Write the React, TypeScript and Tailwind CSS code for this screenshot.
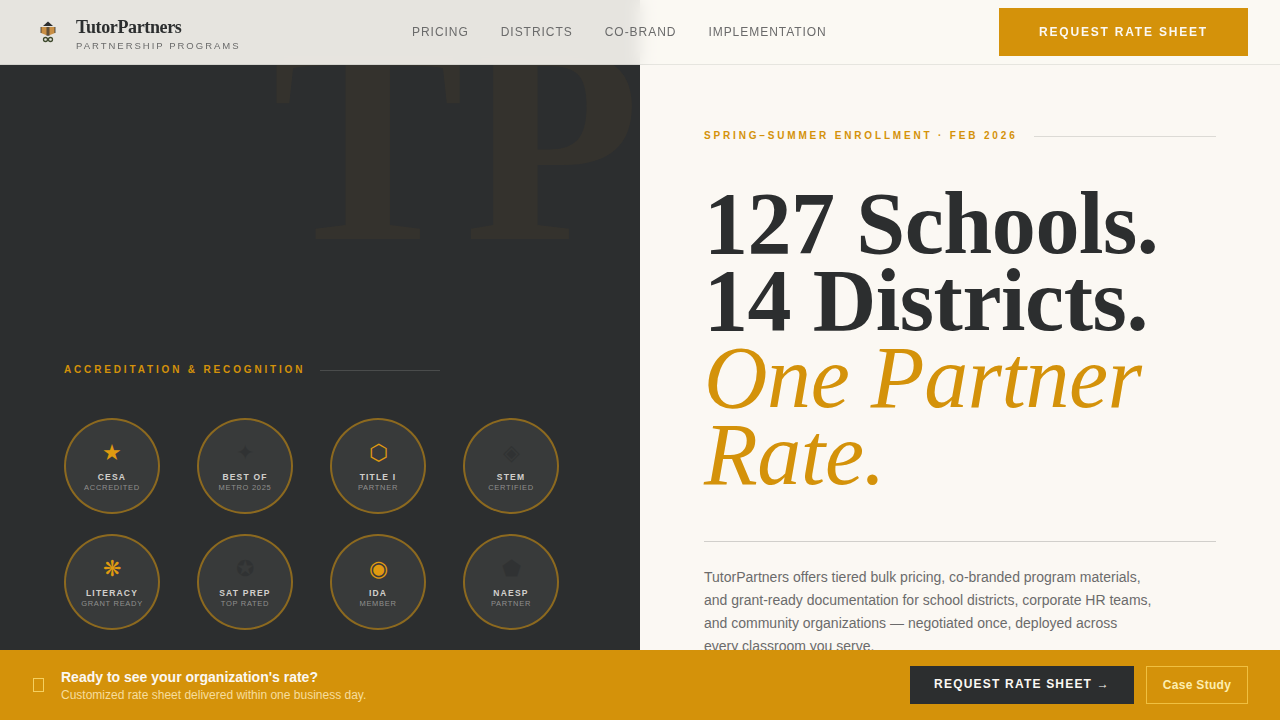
const badges = [
  { icon: '★', title: 'CESA', sub: 'ACCREDITED', dark: false },
  { icon: '✦', title: 'BEST OF', sub: 'METRO 2025', dark: true },
  { icon: '⬡', title: 'TITLE I', sub: 'PARTNER', dark: false },
  { icon: '◈', title: 'STEM', sub: 'CERTIFIED', dark: true },
  { icon: '❋', title: 'LITERACY', sub: 'GRANT READY', dark: false },
  { icon: '✪', title: 'SAT PREP', sub: 'TOP RATED', dark: true },
  { icon: '◉', title: 'IDA', sub: 'MEMBER', dark: false },
  { icon: '⬟', title: 'NAESP', sub: 'PARTNER', dark: true },
]

const navLinks = ['PRICING', 'DISTRICTS', 'CO-BRAND', 'IMPLEMENTATION']

function Logo() {
  return (
    <svg width="16" height="22" viewBox="0 0 16 22" className="shrink-0">
      <path d="M8 0.5 L13 5 L3 5 Z" fill="#2c2e2f" />
      <path d="M1 6 H15 V12 L10 14 H6 L1 12 Z" fill="#c98f45" />
      <rect x="6.5" y="6" width="3" height="9" fill="#2c2e2f" opacity="0.65" />
      <path d="M1 12 V6 M15 12 V6" stroke="#2c2e2f" strokeWidth="0.8" />
      <circle cx="5.5" cy="18.5" r="2" fill="none" stroke="#3f4a2e" strokeWidth="1.3" />
      <circle cx="10.5" cy="18.5" r="2" fill="none" stroke="#3f4a2e" strokeWidth="1.3" />
    </svg>
  )
}

export default function App() {
  return (
    <div className="relative h-screen overflow-hidden bg-[#fbf8f3] font-['Liberation_Sans',sans-serif]">
      <header className="absolute top-0 left-0 right-0 z-20 flex h-[65px] items-center justify-between border-b border-[#2c2e2f]/10 bg-[#fbf8f3]/90 pl-10 pr-8 backdrop-blur-sm">
        <div className="flex items-center gap-5">
          <Logo />
          <div>
            <div className="font-['Liberation_Serif',serif] text-lg font-bold leading-[28px] tracking-[-0.38px] text-[#2c2e2f]">TutorPartners</div>
            <div className="mt-[-1px] text-[9.5px] leading-[12px] tracking-[2px] text-[#6b6b6b]">PARTNERSHIP PROGRAMS</div>
          </div>
        </div>
        <nav className="absolute left-[412px] flex gap-8">
          {navLinks.map((l) => (
            <span key={l} className="text-xs tracking-[0.96px] text-[#6b6b6b]">{l}</span>
          ))}
        </nav>
        <div className="flex h-12 w-[249px] items-center justify-center bg-[#d4920a] text-xs font-bold tracking-[1.8px] text-[#fbf8f3]">REQUEST RATE SHEET</div>
      </header>

      <main className="grid h-full grid-cols-2">
        <section className="relative overflow-hidden bg-[#2c2e2f] px-16 pt-[363px]">
          <div className="absolute right-0 top-[-2px] font-['Liberation_Serif',serif] text-[288px] font-bold leading-none text-[#d4920a]/[0.05]">TP</div>
          <div className="relative flex items-center gap-[15px]">
            <span className="text-[10px] font-bold leading-[14px] tracking-[2.84px] text-[#d4920a]">ACCREDITATION &amp; RECOGNITION</span>
            <span className="h-px w-[120px] bg-[#fbf8f3]/15" />
          </div>
          <div className="relative mt-[41px] grid w-[495px] grid-cols-[96px_96px_96px_96px] justify-between gap-y-5">
            {badges.map((b) => (
              <div key={b.title} className="flex h-24 w-24 flex-col items-center justify-center rounded-full border-2 border-[#d4920a]/55 bg-[#fbf8f3]/[0.06] text-center">
                <span className={`text-[22px] leading-[26px] ${b.dark ? 'text-[#2c2e2f]/60' : 'text-[#e09a10]'}`}>{b.icon}</span>
                <span className="mt-[5px] text-[8.5px] font-bold leading-[12px] tracking-[1.2px] text-[#fbf8f3]/80">{b.title}</span>
                <span className="text-[7.5px] leading-[10px] tracking-[0.7px] text-[#fbf8f3]/45">{b.sub}</span>
              </div>
            ))}
          </div>
        </section>

        <section className="bg-[#fbf8f3] px-16 pt-[129px]">
          <div className="flex items-center gap-4">
            <span className="text-[10px] font-bold leading-[14px] tracking-[2.83px] text-[#d4920a]">SPRING–SUMMER ENROLLMENT · FEB 2026</span>
            <span className="h-px flex-1 bg-[#2c2e2f]/15" />
          </div>
          <h1 className="mt-[42px] font-['Liberation_Serif',serif] text-[88px] font-bold leading-[77px] tracking-[-0.44px] text-[#2c2e2f]">
            127 Schools.<br />14 Districts.<br />
            <em className="font-normal text-[#d4920a]">One Partner Rate.</em>
          </h1>
          <div className="mt-[48px] h-px bg-[#2c2e2f]/20" />
          <p className="mt-6 w-[450px] text-sm leading-[23px] text-[#6b6b6b]">
            TutorPartners offers tiered bulk pricing, co-branded program materials, and grant-ready documentation for school districts, corporate HR teams, and community organizations — negotiated once, deployed across every classroom you serve.
          </p>
        </section>
      </main>

      <footer className="absolute bottom-0 left-0 right-0 z-20 flex h-[70px] items-center justify-between bg-[#d4920a] pl-[33px] pr-8">
        <div className="flex items-center gap-[17px]">
          <span className="h-[14px] w-[11px] border border-[#f5d060]" />
          <div>
            <div className="text-sm font-bold leading-[18px] text-[#fbf8f3]">Ready to see your organization's rate?</div>
            <div className="mt-[1px] text-xs leading-[16px] text-[#f7dd9c]">Customized rate sheet delivered within one business day.</div>
          </div>
        </div>
        <div className="flex items-center gap-3">
          <div className="flex h-[38px] w-56 items-center justify-center gap-1 bg-[#2c2e2f] pb-[2px] text-xs font-bold tracking-[1.2px] text-[#fbf8f3]">REQUEST RATE SHEET →</div>
          <div className="flex h-[38px] w-[102px] items-center justify-center border border-[#f0c040] text-xs font-bold tracking-[0.3px] text-[#fdeeb0]">Case Study</div>
        </div>
      </footer>
    </div>
  )
}
